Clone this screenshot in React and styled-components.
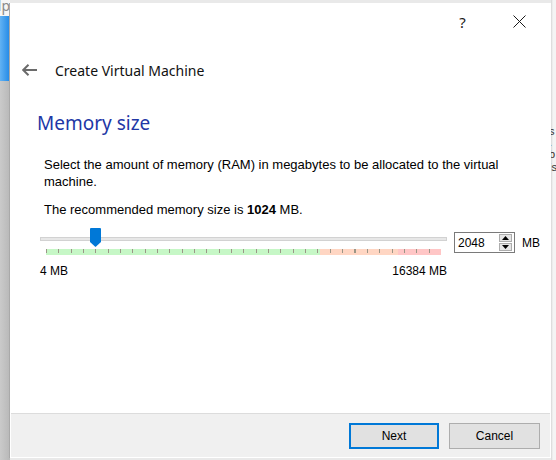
import React from 'react';
import styled, { createGlobalStyle } from 'styled-components';

const GlobalStyle = createGlobalStyle`
  html, body {
    margin: 0;
    padding: 0;
    background: #ececec;
  }
  body {
    font-family: "Liberation Sans", Arial, sans-serif;
  }
`;

const Screen = styled.div`
  display: flex;
  width: 556px;
  height: 460px;
  overflow: hidden;
  background: #ececec;
`;

const LeftStrip = styled.div`
  width: 10px;
  flex-shrink: 0;
  display: flex;
  flex-direction: column;
`;

const LeftTop = styled.div`
  height: 16px;
  background: #f6f6f6;
  color: #8a8a8a;
  font: 14px/12px "Noto Sans", sans-serif;
  overflow: hidden;
  white-space: nowrap;
  direction: rtl;
`;

const LeftBlue = styled.div`
  height: 65px;
  background: linear-gradient(to right, #62b2f3, #2088e6);
`;

const LeftGrey = styled.div`
  flex: 1;
  background: linear-gradient(to right, #cacaca, #b8b8b8);
`;

const RightStrip = styled.div`
  flex: 1;
  background: linear-gradient(to right, #d6d6d6, #f4f4f4 2px);
  display: flex;
  flex-direction: column;
  padding-top: 125px;
  overflow: hidden;
  color: #333;
  font-size: 11px;
  font-family: "Liberation Sans", sans-serif;
`;

const Fragment = styled.span`
  display: block;
  height: ${(p) => p.h}px;
  line-height: ${(p) => p.h}px;
  margin-left: -2px;
  color: ${(p) => p.color || '#333'};
`;

const Middle = styled.div`
  width: 541px;
  flex-shrink: 0;
  display: flex;
  flex-direction: column;
  padding: 3px 0 2px;
  box-sizing: border-box;
  background: #e9e9e9;
`;

const Dialog = styled.div`
  flex: 1;
  display: flex;
  flex-direction: column;
  background: #fff;
  padding: 1px;
  box-shadow: -1px 0 0 #a9a9a9;
`;

const TitleBar = styled.div`
  height: 35px;
  display: flex;
  justify-content: flex-end;
  align-items: center;
  padding-right: 2px;
`;

const TitleButton = styled.div`
  width: 57px;
  height: 100%;
  display: flex;
  align-items: center;
  justify-content: center;
  color: #1a1a1a;
  font: 15px "Noto Sans", sans-serif;
`;

const Header = styled.div`
  height: 62px;
  display: flex;
  align-items: center;
  padding-left: 11px;
  gap: 17px;
`;

const HeaderTitle = styled.div`
  font: 14px "Noto Sans", sans-serif;
  color: #111;
`;

const Content = styled.div`
  padding: 9px 0 0 26px;
  display: flex;
  flex-direction: column;
`;

const Heading = styled.h1`
  margin: 0;
  font: 19px/26px "Noto Sans", sans-serif;
  color: #2237a6;
`;

const BodyText = styled.p`
  margin: ${(p) => p.top}px 0 0 7px;
  width: 480px;
  font-size: 13px;
  line-height: 17px;
  color: #000;
  b {
    font-weight: bold;
  }
`;

const SliderRow = styled.div`
  display: flex;
  align-items: flex-start;
  margin: 10px 0 0 3px;
`;

const SliderCol = styled.div`
  width: 407px;
  display: flex;
  flex-direction: column;
`;

const TrackArea = styled.div`
  position: relative;
  height: 19px;
  display: flex;
  align-items: center;
  padding-top: 3px;
  box-sizing: border-box;
`;

const Track = styled.div`
  flex: 1;
  height: 2px;
  background: #e7e7e7;
  border: 1px solid #d2d2d2;
`;

const Thumb = styled.svg`
  position: absolute;
  left: 50px;
  top: 0;
`;

const TickBand = styled.div`
  margin: 2px 6px 0 6px;
  height: 6px;
  background:
    repeating-linear-gradient(to right, #9b9687 0 1px, transparent 1px 12.34px) top left / 100% 4px no-repeat,
    linear-gradient(to right, #c6f7c6 0 274px, #ffd6c3 274px 352px, #ffc6c6 352px);
`;

const Labels = styled.div`
  display: flex;
  justify-content: space-between;
  margin-top: 9px;
  font-size: 12px;
  color: #000;
`;

const SpinBox = styled.div`
  margin-left: 7px;
  margin-top: 4px;
  width: 61px;
  height: 21px;
  box-sizing: border-box;
  border: 1px solid #7a7a7a;
  display: flex;
  align-items: center;
  justify-content: space-between;
  padding: 0 2px 0 3px;
  font-size: 12px;
  color: #000;
`;

const SpinButtons = styled.div`
  width: 13px;
  height: 17px;
  display: flex;
  flex-direction: column;
  gap: 1px;
`;

const SpinHalf = styled.div`
  flex: 1;
  display: flex;
  align-items: center;
  justify-content: center;
  background: #e5e5e5;
  border: 1px solid #acacac;
`;

const Unit = styled.span`
  margin: 8px 0 0 7px;
  font-size: 12px;
  color: #000;
`;

const Footer = styled.div`
  margin-top: auto;
  height: 44px;
  box-sizing: border-box;
  background: #f0f0f0;
  border-top: 1px solid #dcdcdc;
  display: flex;
  justify-content: flex-end;
  align-items: flex-start;
  gap: 10px;
  padding: 9px 10px 0 0;
`;

const Button = styled.button`
  width: ${(p) => (p.primary ? 90 : 91)}px;
  height: 26px;
  box-sizing: border-box;
  background: #e1e1e1;
  border: ${(p) => (p.primary ? '2px solid #0078d7' : '1px solid #adadad')};
  font: 12px "Liberation Sans", sans-serif;
  color: #000;
  padding: 0;
`;

const Arrow = ({ up }) => (
  <svg width="7" height="4" viewBox="0 0 7 4">
    <polygon points={up ? '3.5,0 7,4 0,4' : '0,0 7,0 3.5,4'} fill="#000" />
  </svg>
);

export default function App() {
  return (
    <>
      <GlobalStyle />
      <Screen>
        <LeftStrip>
          <LeftTop>lp</LeftTop>
          <LeftBlue />
          <LeftGrey />
        </LeftStrip>
        <Middle>
          <Dialog>
            <TitleBar>
              <TitleButton>?</TitleButton>
              <TitleButton>
                <svg width="13" height="13" viewBox="0 0 13 13">
                  <path d="M0.5 0.5 L12.5 12.5 M12.5 0.5 L0.5 12.5" stroke="#1a1a1a" strokeWidth="1" />
                </svg>
              </TitleButton>
            </TitleBar>
            <Header>
              <svg width="16" height="12" viewBox="0 0 16 12">
                <path d="M1 6 H15 M6.5 0.8 L1.2 6 L6.5 11.2" stroke="#6b6b6b" strokeWidth="2" fill="none" />
              </svg>
              <HeaderTitle>Create Virtual Machine</HeaderTitle>
            </Header>
            <Content>
              <Heading>Memory size</Heading>
              <BodyText top={20}>
                Select the amount of memory (RAM) in megabytes to be allocated to the virtual machine.
              </BodyText>
              <BodyText top={11}>
                The recommended memory size is <b>1024</b> MB.
              </BodyText>
              <SliderRow>
                <SliderCol>
                  <TrackArea>
                    <Track />
                    <Thumb width="11" height="19" viewBox="0 0 11 19">
                      <path d="M1 0 H10 Q11 0 11 1 V14 L5.5 19 L0 14 V1 Q0 0 1 0 Z" fill="#0078d7" />
                    </Thumb>
                  </TrackArea>
                  <TickBand />
                  <Labels>
                    <span>4 MB</span>
                    <span>16384 MB</span>
                  </Labels>
                </SliderCol>
                <SpinBox>
                  <span>2048</span>
                  <SpinButtons>
                    <SpinHalf><Arrow up /></SpinHalf>
                    <SpinHalf><Arrow /></SpinHalf>
                  </SpinButtons>
                </SpinBox>
                <Unit>MB</Unit>
              </SliderRow>
            </Content>
            <Footer>
              <Button primary>Next</Button>
              <Button>Cancel</Button>
            </Footer>
          </Dialog>
        </Middle>
        <RightStrip>
          <Fragment h={12}>s</Fragment>
          <Fragment h={11}>.</Fragment>
          <Fragment h={13} color="#3a2a20">b</Fragment>
          <Fragment h={12}>is</Fragment>
        </RightStrip>
      </Screen>
    </>
  );
}
